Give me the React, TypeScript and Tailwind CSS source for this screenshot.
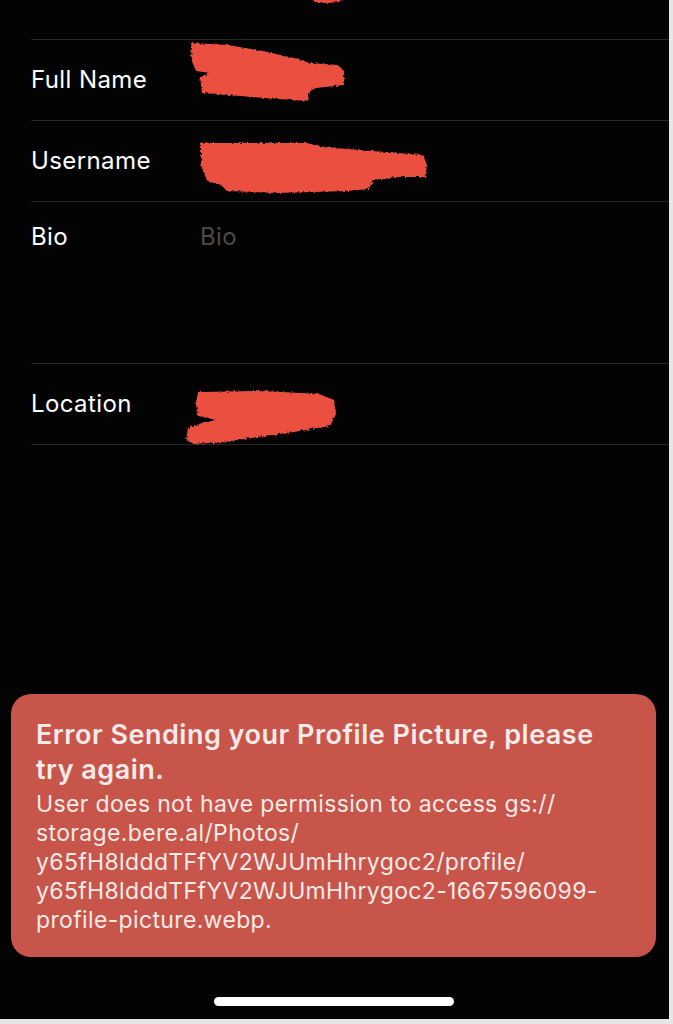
import React from "react";

const font = { fontFamily: "Inter, 'Noto Sans', 'Liberation Sans', sans-serif" };

function Blob({ d, w, h, className }: { d: string; w: number; h: number; className: string }) {
  return (
    <svg width={w} height={h} viewBox={`0 0 ${w} ${h}`} className={className}>
      <defs>
        <filter id="rough" x="-5%" y="-5%" width="110%" height="110%">
          <feTurbulence type="fractalNoise" baseFrequency="0.35" numOctaves="2" result="n" />
          <feDisplacementMap in="SourceGraphic" in2="n" scale="4" />
        </filter>
      </defs>
      <path d={d} fill="#ea5040" filter="url(#rough)" />
    </svg>
  );
}

function Row({ label, children, tall }: { label: string; children?: React.ReactNode; tall?: boolean }) {
  return (
    <div
      className={`flex border-b border-[#262626] ${tall ? "h-[162px] items-start pt-[21px]" : "h-[81px] items-center"}`}
    >
      <div className="w-[169px] shrink-0 text-[24px] leading-[28px] tracking-[0.4px] text-white">{label}</div>
      <div className="relative flex-1 text-[24px] leading-[28px] tracking-[0.4px]">{children}</div>
    </div>
  );
}

export default function App() {
  return (
    <div className="h-[1024px] w-[673px] overflow-hidden bg-[#e6e6e6]" style={font}>
      <div className="flex h-[1019px] w-[669px] flex-col bg-[#030303]">
        <div className="pl-[31px]">
          <div className="relative h-[40px] border-b border-[#262626]">
            <Blob
              w={40}
              h={6}
              className="absolute left-[276px] top-[-2px]"
              d="M4 0 L36 0 L32 4 L20 5 L8 4 Z"
            />
          </div>
          <Row label="Full Name">
            <Blob
              w={160}
              h={64}
              className="absolute left-[-12px] top-[-39px]"
              d="M4 2 L40 4 L75 10 L110 18 L122 22 L150 24 L156 30 L156 44 L128 47 L122 50 L120 60 L90 58 L40 54 L14 52 L12 36 L22 32 L8 30 L3 18 Z"
            />
          </Row>
          <Row label="Username">
            <Blob
              w={236}
              h={58}
              className="absolute left-[-3px] top-[-20px]"
              d="M4 2 L110 2 L125 6 L175 10 L226 14 L230 24 L228 36 L200 36 L190 38 L176 38 L172 48 L150 50 L80 52 L30 50 L24 44 L10 40 L4 24 Z"
            />
          </Row>
          <Row label="Bio" tall>
            <span className="text-[#4a4a4c]">Bio</span>
          </Row>
          <Row label="Location">
            <Blob
              w={160}
              h={60}
              className="absolute left-[-16px] top-[-14px]"
              d="M14 2 L80 1 L135 4 L150 10 L152 24 L146 36 L110 42 L80 46 L40 52 L10 54 L2 50 L4 38 L14 34 L32 30 L14 26 L12 12 Z"
            />
          </Row>
        </div>

        <div className="flex-1" />

        <div className="ml-[11px] mr-[13px] h-[263px] rounded-[20px] bg-[#c8554a] px-[25px] pt-[23px] text-[#f6ebe9]">
          <div className="text-[27px] font-semibold leading-[35px] tracking-[0.5px]">
            <div className="whitespace-nowrap">Error Sending your Profile Picture, please</div>
            <div className="whitespace-nowrap">try again.</div>
          </div>
          <div className="mt-[3px] text-[23px] leading-[29px] tracking-[0.35px]">
            <div className="whitespace-nowrap">User does not have permission to access gs://</div>
            <div className="whitespace-nowrap">storage.bere.al/Photos/</div>
            <div className="whitespace-nowrap">y65fH8ldddTFfYV2WJUmHhrygoc2/profile/</div>
            <div className="whitespace-nowrap">y65fH8ldddTFfYV2WJUmHhrygoc2-1667596099-</div>
            <div className="whitespace-nowrap">profile-picture.webp.</div>
          </div>
        </div>

        <div className="flex justify-center pb-[13px] pt-[40px]">
          <div className="ml-[-2px] h-[9px] w-[240px] rounded-full bg-white" />
        </div>
      </div>
    </div>
  );
}
